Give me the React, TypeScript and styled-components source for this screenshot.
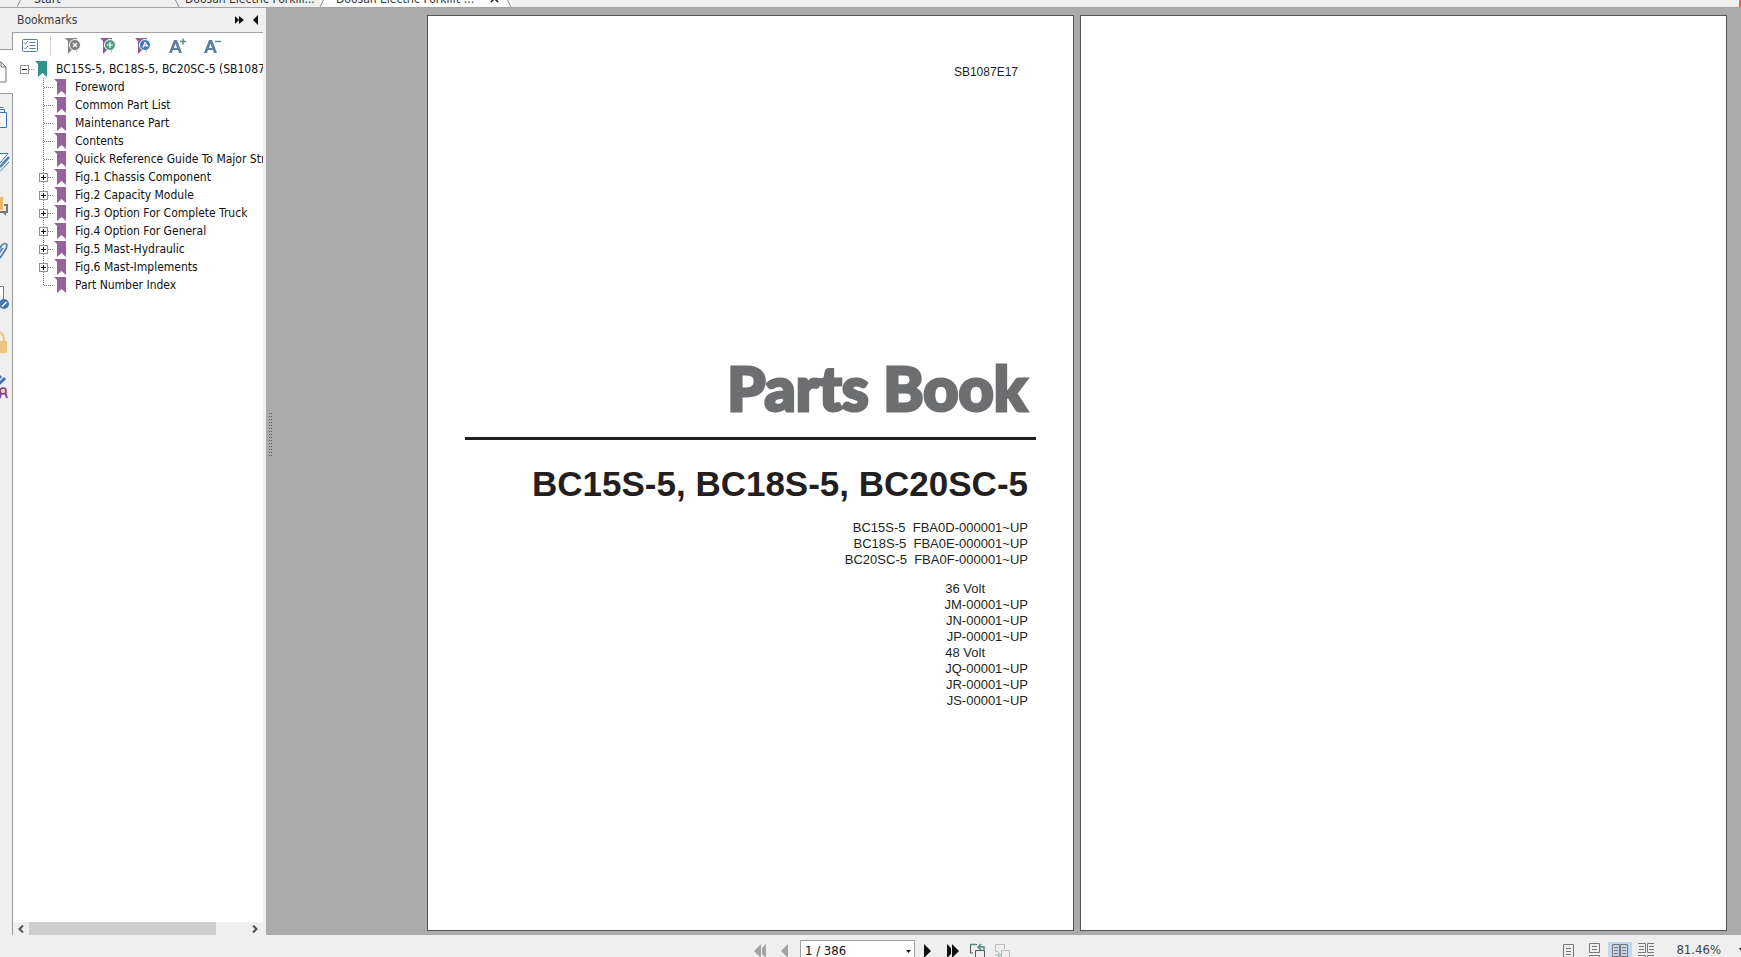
import React from "react";
import styled, { createGlobalStyle } from "styled-components";

const uiFont = `"DejaVu Sans Condensed", "Noto Sans", sans-serif`;
const docFont = `"Liberation Sans", Arial, sans-serif`;

const GlobalStyle = createGlobalStyle`
  * { box-sizing: border-box; }
  html, body, #root { height: 100%; }
  body { margin: 0; overflow: hidden; background: #efefef; font: 12px/18px ${uiFont}; color: #111; }
  button { border: 0; padding: 0; background: none; color: inherit; font: inherit; display: flex; align-items: center; justify-content: center; }
  svg { display: block; flex: none; }
`;

const Shell = styled.div`
  display: flex;
  flex-direction: column;
  height: 100%;
`;

/* Tab strip */
const TabStrip = styled.nav`
  display: flex;
  align-items: flex-end;
  flex: none;
  height: 8px;
  padding-left: 17px;
  overflow: hidden;
  border-bottom: 1px solid #a3a3a3;
  background: #efefef;
`;
const Tab = styled.button<{ $width: number; $active?: boolean }>`
  flex: none;
  justify-content: space-between;
  width: ${(p) => p.$width}px;
  height: 16px;
  color: #333;
  background: ${(p) => (p.$active ? "#fcfcfc" : "transparent")};
`;
const TabLabel = styled.span<{ $left: number }>`
  flex: 1;
  padding-left: ${(p) => p.$left}px;
  text-align: left;
  white-space: nowrap;
`;
const TabEdge = styled.svg`
  align-self: flex-end;
`;
const CloseAlert = styled.span`
  width: 2px;
  height: 7px;
  margin-left: auto;
  background: #e8683c;
`;

/* Body */
const Body = styled.div`
  display: flex;
  flex: 1;
  min-height: 0;
`;
const Dock = styled.aside`
  display: flex;
  flex-direction: column;
  flex: none;
  width: 266px;
`;
const DockHeader = styled.header`
  display: flex;
  align-items: center;
  gap: 9px;
  flex: none;
  height: 24px;
  padding: 0 8px 0 17px;
`;
const DockTitle = styled.h2`
  flex: 1;
  margin: 0;
  font: inherit;
  color: #3c3c3c;
`;
const DockBody = styled.div`
  display: flex;
  flex: 1;
  min-height: 0;
  padding-right: 3px;
`;
const Rail = styled.nav`
  display: flex;
  flex-direction: column;
  width: 13px;
  flex: none;
  &::before { content: ""; height: 17px; border-right: 1px solid #9a9a9a; }
  &::after { content: ""; flex: 1; border-right: 1px solid #9a9a9a; }
`;
const RailButton = styled.button<{ $active?: boolean }>`
  flex: none;
  justify-content: flex-start;
  width: 13px;
  height: 45px;
  overflow: hidden;
  background: ${(p) => (p.$active ? "#fff" : "transparent")};
  border: solid #9a9a9a;
  border-width: ${(p) => (p.$active ? "1px 0 1px 0" : "0 1px 0 0")};
`;
const Panel = styled.section`
  display: flex;
  flex-direction: column;
  flex: 1;
  min-width: 0;
  background: #fff;
  border-top: 1px solid #a3a3a3;
`;
const Toolbar = styled.div`
  display: flex;
  align-items: center;
  gap: 17px;
  flex: none;
  height: 26px;
  margin-bottom: 1px;
  padding-left: 8px;
`;
const ToolButton = styled.button`
  width: 18px;
  height: 20px;
`;
const Divider = styled.span`
  width: 1px;
  height: 20px;
  margin: 0 -4px 0 -6px;
  background: #d4d4d4;
`;

/* Bookmark tree */
const Tree = styled.ul`
  flex: 1;
  margin: 0;
  padding: 0;
  overflow: hidden;
  list-style: none;
`;
const Children = styled.ul`
  margin: 0;
  padding: 0 0 0 19px;
  list-style: none;
`;
const Row = styled.div`
  display: flex;
  align-items: center;
  height: 18px;
  padding-left: 7px;
  white-space: nowrap;
`;
const RowLink = styled.a`
  padding-left: 9px;
  color: #111;
  text-decoration: none;
`;

const ScrollBar = styled.div`
  display: flex;
  flex: none;
  height: 13px;
  background: #efefef;
`;
const ScrollButton = styled.button`
  width: 16px;
`;
const ScrollTrack = styled.div`
  flex: 1;
`;
const ScrollThumb = styled.div`
  width: 86%;
  height: 100%;
  background: #cdcdcd;
`;

/* Document area */
const Viewer = styled.main`
  display: flex;
  flex: 1;
  min-width: 0;
  background: #ababab;
`;
const Splitter = styled.div`
  display: flex;
  align-items: center;
  flex: none;
  width: 161px;
  padding: 0 0 74px 3px;
`;
const Pages = styled.div`
  display: flex;
  flex: 1;
  gap: 6px;
  min-width: 0;
  padding: 7px 14px 4px 0;
`;
const Sheet = styled.article`
  flex: 1;
  min-width: 0;
  padding: 48px 37px 0;
  background: #fff;
  border: 1px solid #555;
  font: 13px/16px ${docFont};
  color: #231f20;
  text-align: right;
`;
const DocCode = styled.p`
  margin: 0;
  padding-right: 18px;
  font-size: 12px;
`;
const BookTitle = styled.h1`
  margin: 272px 0 0;
  padding-right: 9px;
  font: 900 61px/72px Lato, "Open Sans", sans-serif;
  color: #6d6e70;
  -webkit-text-stroke: 3px #6d6e70;
  white-space: nowrap;
`;
const Rule = styled.hr`
  height: 3px;
  margin: 13px 0 24px;
  border: 0;
  background: #231f20;
`;
const Models = styled.h2`
  margin: 0 0 16px;
  padding-right: 8px;
  font-size: 35px;
  line-height: 40px;
  white-space: nowrap;
`;
const Serials = styled.ul`
  margin: 0 0 13px;
  padding: 0 8px 0 0;
  list-style: none;
  white-space: pre;
`;
const Volt = styled.li`
  padding-right: 43px;
`;

/* Status bar */
const StatusBar = styled.footer`
  display: grid;
  grid-template-columns: 1fr auto 1fr;
  flex: none;
  height: 22px;
  padding-top: 5px;
  overflow: hidden;
  background: #efefef;
`;
const Pager = styled.div`
  grid-column: 2;
  display: flex;
  gap: 10px;
  height: 22px;
  margin-left: 21px;
`;
const StatusButton = styled.button`
  width: 15px;
  height: 22px;
`;
const ModeButton = styled.button<{ $on: boolean }>`
  width: 24px;
  height: 20px;
  margin-top: 2px;
  background: ${(p) => (p.$on ? "#c5d7f0" : "transparent")};
`;
const PageField = styled.label`
  position: relative;
  width: 115px;
  margin: 0 -5px 0 -2px;
`;
const PageSelect = styled.select`
  appearance: none;
  width: 100%;
  height: 22px;
  padding: 0 4px;
  border: 1px solid #a0a0a0;
  border-radius: 0;
  background: #fff;
  color: #111;
  font: 13px/20px ${uiFont};
`;
const SelectArrow = styled.svg`
  position: absolute;
  top: 10px;
  right: 4px;
  pointer-events: none;
`;
const ViewModes = styled.div`
  display: flex;
  justify-content: flex-end;
  gap: 2px;
  height: 22px;
`;
const Zoom = styled.button`
  gap: 18px;
  height: 20px;
  margin-left: 16px;
  font-size: 13px;
  color: #444;
`;

const Slash = ({ back }: { back?: boolean }) => (
  <TabEdge width="6" height="8" viewBox="0 0 6 8">
    <path d={back ? "M1 0 5 8" : "M4 0 0 8"} stroke="#8a8a8a" fill="none" />
  </TabEdge>
);

const Ribbon = ({ color }: { color: string }) => (
  <svg width="12" height="18" viewBox="0 0 12 18">
    <path d="M0 1H12V17L7.500 13 3 17V4Z" fill={color} />
  </svg>
);

const Twist = ({ kind, last }: { kind: "root" | "closed" | "leaf"; last?: boolean }) => {
  const dots = { stroke: "#7d7d7d", strokeDasharray: "1 1", fill: "none" };
  return (
    <svg width="15" height="18" viewBox="0 0 15 18">
      {kind !== "root" && <path d={last ? "M4.500 0V9.500" : "M4.500 0V18"} {...dots} />}
      <path d="M5 9.500H15" {...dots} />
      {kind !== "leaf" && (
        <>
          <rect x="0.500" y="5.500" width="8" height="8" fill="#fff" stroke="#919191" />
          <path d={kind === "root" ? "M2 9.500H7" : "M2 9.500H7M4.500 7V12"} stroke="#111" />
        </>
      )}
    </svg>
  );
};

const MarkTool = ({ color, badge, glyph }: { color: string; badge: string; glyph: string }) => (
  <svg width="18" height="18" viewBox="0 0 18 18">
    <path d="M1 1H13V15L9 12 4 17V4Z" fill={color} />
    <circle cx="11" cy="8" r="5.500" fill={badge} stroke="#fff" strokeWidth="1" />
    <path d={glyph} stroke="#fff" strokeWidth="1.200" fill="none" />
  </svg>
);

const FontTool = ({ sign }: { sign: string }) => (
  <svg width="18" height="18" viewBox="0 0 18 18">
    <path
      d="M5 3H8L13 16H10L9 13H4L3 16H0ZM6.500 6.500 5 11H8Z"
      fill="#5b7da6"
      fillRule="evenodd"
    />
    <path d={sign} stroke="#4f9480" strokeWidth="1.500" fill="none" />
  </svg>
);

const railItems = [
  {
    name: "Pages",
    art: <path d="M-4 2H1L6 7V22H-4M1 2V7H6" fill="#fff" stroke="#777" />,
  },
  {
    name: "Page thumbnails",
    art: (
      <>
        <path d="M-4 2.500H3.500M-4 4.500H4.500V8" fill="none" stroke="#4077b0" />
        <path d="M-4 7.500H6.500V22.500H-4" fill="#fff" stroke="#4077b0" />
      </>
    ),
  },
  {
    name: "Layers",
    art: (
      <>
        <path d="M-2 3.500H8L0 13Z" fill="#fff" stroke="#4077b0" />
        <path d="M9 7 0 17" stroke="#4d83a8" strokeWidth="2.500" fill="none" />
        <path d="M9 12 0 21.500" stroke="#4d83a8" fill="none" />
      </>
    ),
  },
  {
    name: "Comments",
    art: (
      <>
        <rect x="-2" y="2" width="5" height="13" fill="#edb964" />
        <path d="M0 17H7V10H4" stroke="#777" strokeWidth="2" fill="none" />
        <path d="M2 17H6V21Z" fill="#777" />
      </>
    ),
  },
  {
    name: "Attachments",
    art: <path d="M-3 12 2 5Q5 2 7 5 7 8 4 12L0 18M-2 14 3 8" stroke="#4d7eaa" strokeWidth="1.700" fill="none" />,
  },
  {
    name: "Form fields",
    art: (
      <>
        <path d="M-4 1.500H3.500V14" stroke="#777" fill="#fff" />
        <circle cx="4" cy="19" r="5" fill="#4077b0" />
        <path d="M2 21.500 6.500 17" stroke="#fff" strokeWidth="1.500" />
      </>
    ),
  },
  {
    name: "Security",
    art: (
      <>
        <path d="M-2 2Q4 2 4 12" stroke="#edc57f" strokeWidth="2" fill="none" />
        <rect x="-3" y="11" width="10" height="12" rx="1" fill="#edc57f" />
      </>
    ),
  },
  {
    name: "Signatures",
    art: (
      <>
        <path d="M-2 10 5 3M-2 4 1 1" stroke="#3c72b3" strokeWidth="3" fill="none" />
        <path d="M1 17 0 23M5 17 7 23" stroke="#7b4ba0" strokeWidth="2" />
        <circle cx="3" cy="16" r="3" fill="#f6d0a4" stroke="#7b4080" strokeWidth="1.500" />
      </>
    ),
  },
];

const bookmarks: { label: string; group?: boolean }[] = [
  { label: "Foreword" },
  { label: "Common Part List" },
  { label: "Maintenance Part" },
  { label: "Contents" },
  { label: "Quick Reference Guide To Major Structure" },
  { label: "Fig.1 Chassis Component", group: true },
  { label: "Fig.2 Capacity Module", group: true },
  { label: "Fig.3 Option For Complete Truck", group: true },
  { label: "Fig.4 Option For General", group: true },
  { label: "Fig.5 Mast-Hydraulic", group: true },
  { label: "Fig.6 Mast-Implements", group: true },
  { label: "Part Number Index" },
];

const viewModes = [
  { name: "Single page", on: false, d: "M7.500 4.500H17.500V18.500H7.500ZM10 8.500H15M10 11.500H15M10 14.500H15" },
  { name: "Continuous", on: false, d: "M7.500 3.500H17.500V12.500H7.500ZM10 6.500H15M10 9.500H15M7.500 20V15.500H17.500V20M10 18.500H15" },
  { name: "Facing", on: true, d: "M4.500 4.500H11.500V16.500H4.500ZM12.500 4.500H19.500V16.500H12.500ZM6 7.500H10M6 10.500H10M6 13.500H10M14 7.500H18M14 10.500H18M14 13.500H18" },
  { name: "Continuous facing", on: false, d: "M4 3.500H11.500V12.500H4M20 3.500H13.500V12.500H20M5 6.500H10M5 9.500H10M15 6.500H20M15 9.500H20M4 15.500H11.500V20M20 15.500H13.500V20M5 18.500H10M15 18.500H20" },
];

export default function App() {
  return (
    <Shell>
      <GlobalStyle />
      <TabStrip>
        <Tab $width={157}>
          <Slash />
          <TabLabel $left={11}>Start</TabLabel>
        </Tab>
        <Tab $width={146}>
          <Slash back />
          <TabLabel $left={5}>Doosan Electric Forklif...</TabLabel>
        </Tab>
        <Tab $width={192} $active>
          <Slash />
          <TabLabel $left={10}>Doosan Electric Forklift ...</TabLabel>
          <svg width="10" height="8" viewBox="0 0 10 8">
            <path d="M1 0 8 7M8 0 1 7" stroke="#222" strokeWidth="1.500" />
          </svg>
          <svg width="6" height="1" />
          <Slash back />
        </Tab>
        <CloseAlert />
      </TabStrip>

      <Body>
        <Dock>
          <DockHeader>
            <DockTitle>Bookmarks</DockTitle>
            <button aria-label="Expand panel">
              <svg width="9" height="8" viewBox="0 0 9 8"><path d="M0 0 4 4 0 8ZM4 0 9 4 4 8Z" fill="#111" /></svg>
            </button>
            <button aria-label="Collapse panel">
              <svg width="5" height="10" viewBox="0 0 5 10"><path d="M5 0V10L0 5Z" fill="#111" /></svg>
            </button>
          </DockHeader>
          <DockBody>
            <Rail>
              {railItems.map((item, i) => (
                <RailButton key={item.name} $active={i === 0} aria-label={item.name}>
                  <svg width="12" height="24" viewBox="0 0 12 24">{item.art}</svg>
                </RailButton>
              ))}
            </Rail>
            <Panel>
              <Toolbar>
                <ToolButton aria-label="Options">
                  <svg width="16" height="14" viewBox="0 0 16 14">
                    <rect x="0.500" y="0.500" width="15" height="12" rx="1" fill="#fff" stroke="#5b7b9d" />
                    <path d="M2 3.500 3.500 5 6 2M2 8.500 3.500 10 6 7M7.500 3.500H13.500M7.500 6.500H13.500M7.500 9.500H13.500" stroke="#5b7b9d" fill="none" />
                  </svg>
                </ToolButton>
                <Divider />
                <ToolButton aria-label="Delete bookmark">
                  <MarkTool color="#868686" badge="#7c7c7c" glyph="M9 6 13 10M13 6 9 10" />
                </ToolButton>
                <ToolButton aria-label="Add bookmark">
                  <MarkTool color="#8a5c99" badge="#529a80" glyph="M11 5V11M8 8H14" />
                </ToolButton>
                <ToolButton aria-label="Set destination">
                  <MarkTool color="#8a5c99" badge="#4478b4" glyph="M9 10.500 11 5.500 13.500 9 10 8.500" />
                </ToolButton>
                <ToolButton aria-label="Increase text size"><FontTool sign="M11 4.500H17M14 1.500V7.500" /></ToolButton>
                <ToolButton aria-label="Decrease text size"><FontTool sign="M11 4.500H17" /></ToolButton>
              </Toolbar>
              <Tree>
                <li>
                  <Row>
                    <Twist kind="root" />
                    <Ribbon color="#329289" />
                    <RowLink href="#cover">BC15S-5, BC18S-5, BC20SC-5 (SB1087E17)</RowLink>
                  </Row>
                  <Children>
                    {bookmarks.map((b, i) => (
                      <li key={b.label}>
                        <Row>
                          <Twist kind={b.group ? "closed" : "leaf"} last={i === bookmarks.length - 1} />
                          <Ribbon color="#95639a" />
                          <RowLink href={`#section-${i + 1}`}>{b.label}</RowLink>
                        </Row>
                      </li>
                    ))}
                  </Children>
                </li>
              </Tree>
              <ScrollBar>
                <ScrollButton aria-label="Scroll left">
                  <svg width="6" height="8" viewBox="0 0 6 8"><path d="M5 0.500 1.500 4 5 7.500" stroke="#505050" strokeWidth="2" fill="none" /></svg>
                </ScrollButton>
                <ScrollTrack><ScrollThumb /></ScrollTrack>
                <ScrollButton aria-label="Scroll right">
                  <svg width="6" height="8" viewBox="0 0 6 8"><path d="M1 0.500 4.500 4 1 7.500" stroke="#505050" strokeWidth="2" fill="none" /></svg>
                </ScrollButton>
              </ScrollBar>
            </Panel>
          </DockBody>
        </Dock>

        <Viewer>
          <Splitter role="separator">
            <svg width="3" height="44" viewBox="0 0 3 44">
              <path d="M0.500 0V44M2.500 0V44" stroke="#555" strokeDasharray="1 2" />
            </svg>
          </Splitter>
          <Pages>
            <Sheet id="cover">
              <DocCode>SB1087E17</DocCode>
              <BookTitle>Parts Book</BookTitle>
              <Rule />
              <Models>BC15S-5, BC18S-5, BC20SC-5</Models>
              <Serials>
                <li>{"BC15S-5  FBA0D-000001~UP"}</li>
                <li>{"BC18S-5  FBA0E-000001~UP"}</li>
                <li>{"BC20SC-5  FBA0F-000001~UP"}</li>
              </Serials>
              <Serials>
                <Volt>36 Volt</Volt>
                <li>JM-00001~UP</li>
                <li>JN-00001~UP</li>
                <li>JP-00001~UP</li>
                <Volt>48 Volt</Volt>
                <li>JQ-00001~UP</li>
                <li>JR-00001~UP</li>
                <li>JS-00001~UP</li>
              </Serials>
            </Sheet>
            <Sheet />
          </Pages>
        </Viewer>
      </Body>

      <StatusBar>
        <Pager>
          <StatusButton aria-label="First page">
            <svg width="12" height="14" viewBox="0 0 12 14"><path d="M7 0V14L0 7ZM12 0V14L8 10V4Z" fill="#a3a3a3" /></svg>
          </StatusButton>
          <StatusButton aria-label="Previous page">
            <svg width="8" height="14" viewBox="0 0 8 14"><path d="M7 0V14L0 7Z" fill="#a3a3a3" /></svg>
          </StatusButton>
          <PageField>
            <PageSelect aria-label="Page" defaultValue="1">
              <option value="1">1 / 386</option>
            </PageSelect>
            <SelectArrow width="5" height="3" viewBox="0 0 5 3"><path d="M0 0H5L2.500 3Z" fill="#111" /></SelectArrow>
          </PageField>
          <StatusButton aria-label="Next page">
            <svg width="8" height="14" viewBox="0 0 8 14"><path d="M0 0V14L7 7Z" fill="#111" /></svg>
          </StatusButton>
          <StatusButton aria-label="Last page">
            <svg width="12" height="14" viewBox="0 0 12 14"><path d="M0 0 4 4V10L0 14ZM5 0V14L12 7Z" fill="#111" /></svg>
          </StatusButton>
          <StatusButton aria-label="Previous view">
            <svg width="17" height="18" viewBox="0 0 17 18">
              <path d="M8 2.500H1.500V11H4M6.500 15.500V8.500H15.500V15.500Z" stroke="#555" fill="none" />
              <path d="M1 2.500H7M15 8V5H9M12 2 9 5 12 8" stroke="#4f8f82" strokeWidth="1.500" fill="none" />
            </svg>
          </StatusButton>
          <StatusButton aria-label="Next view">
            <svg width="17" height="18" viewBox="0 0 17 18">
              <path d="M4 9.500H1.500V2.500H10.500V7M7.500 15.500V8.500H15.500V15.500Z" stroke="#bdbdbd" fill="none" />
              <path d="M1 13H6M4 10.500 6.500 13 4 15.500" stroke="#b3cbc6" strokeWidth="1.500" fill="none" />
            </svg>
          </StatusButton>
        </Pager>
        <ViewModes>
          {viewModes.map((m) => (
            <ModeButton key={m.name} $on={m.on} aria-label={m.name}>
              <svg width="24" height="20" viewBox="0 2 24 20"><path d={m.d} fill="none" stroke="#777" /></svg>
            </ModeButton>
          ))}
          <Zoom>
            81.46%
            <svg width="2" height="4" viewBox="0 0 2 4"><path d="M0 0H2V3Z" fill="#111" /></svg>
          </Zoom>
        </ViewModes>
      </StatusBar>
    </Shell>
  );
}
